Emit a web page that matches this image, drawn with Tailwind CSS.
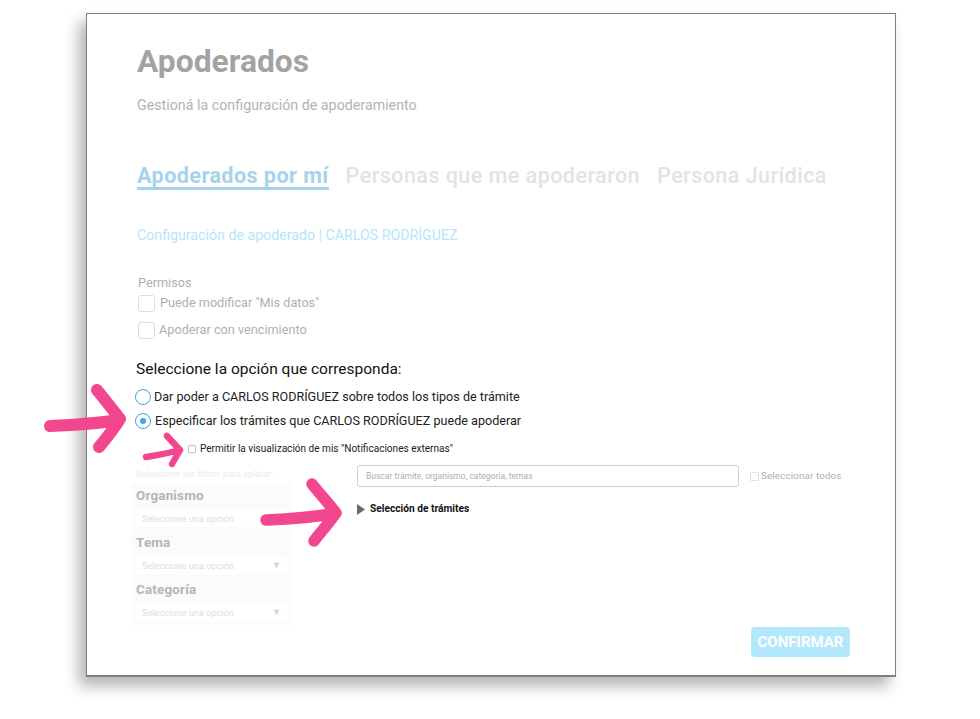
<!doctype html>
<html lang="es">
<head>
<meta charset="utf-8">
<script src="https://cdn.jsdelivr.net/npm/@tailwindcss/browser@4"></script>
</head>
<body class="relative w-[980px] h-[719px] overflow-hidden bg-white font-['Roboto',sans-serif]">
<main class="absolute left-[86px] top-[13px] w-[810px] h-[664px] border border-[#7f7f7f] border-b-2 bg-white shadow-[-7px_9px_14px_rgba(0,0,0,0.3)] pl-[50px] pr-[45px] pt-[29px]">
  <h1 class="text-[31.8px] leading-[36px] font-bold text-[#a3a3a3]">Apoderados</h1>
  <p class="mt-[16px] text-[14.25px] leading-[20px] text-[#b3b3b3]">Gestioná la configuración de apoderamiento</p>
  <nav class="mt-[47px] flex gap-[17px] text-[21.6px] leading-[28px] tracking-[0.42px] h-[31px] whitespace-nowrap">
    <span class="font-bold text-[#a6d3ec] border-b-[3px] border-[#a6d3ec] h-[28px]">Apoderados por mí</span>
    <span class="text-[#e3e3e3] font-medium">Personas que me apoderaron</span>
    <span class="text-[#e3e3e3] font-medium">Persona Jurídica</span>
  </nav>
  <h2 class="mt-[32px] text-[14.2px] leading-[20px] text-[#b5e6fb]">Configuración de apoderado | CARLOS RODRÍGUEZ</h2>
  <section class="mt-[29px] pl-[1px] text-[#b0b0b0] text-[12.7px]">
    <p class="leading-[18px]">Permisos</p>
    <label class="mt-[1px] flex items-center h-[20px]">
      <span class="w-[17px] h-[17px] rounded-[3px] border border-[#dcdcdc] shrink-0"></span>
      <span class="ml-[5px]">Puede modificar "Mis datos"</span>
    </label>
    <label class="mt-[7px] flex items-center h-[20px]">
      <span class="w-[17px] h-[17px] rounded-[3px] border border-[#dcdcdc] shrink-0"></span>
      <span class="ml-[4px]">Apoderar con vencimiento</span>
    </label>
  </section>
  <p class="mt-[18px] -ml-[1px] text-[15.5px] leading-[22px] text-[#111]">Seleccione la opción que corresponda:</p>
  <div class="mt-[7px] -ml-[2px] flex items-center h-[20px] text-[12.6px] text-[#222]">
    <span class="w-[16px] h-[16px] rounded-full border border-[#3ba6e8] shrink-0"></span>
    <span class="ml-[3px]">Dar poder a CARLOS RODRÍGUEZ sobre todos los tipos de trámite</span>
  </div>
  <div class="mt-[4px] -ml-[2px] flex items-center h-[20px] text-[12.6px] text-[#222]">
    <span class="w-[16px] h-[16px] rounded-full border border-[#3ba6e8] shrink-0 flex items-center justify-center"><span class="w-[6px] h-[6px] rounded-full bg-[#3ba6e8]"></span></span>
    <span class="ml-[4px]">Especificar los trámites que CARLOS RODRÍGUEZ puede apoderar</span>
  </div>
  <div class="mt-[11px] ml-[51px] flex items-center h-[14px] text-[10.05px] text-[#222]">
    <span class="w-[8px] h-[8px] border border-[#c4c4c4] rounded-[1px] shrink-0"></span>
    <span class="ml-[4px]">Permitir la visualización de mis "Notificaciones externas"</span>
  </div>
  <div class="mt-[9px] flex -ml-[6px]">
    <aside class="w-[158px] shrink-0 pt-[3px]">
      <p class="pl-[5px] text-[9.2px] leading-[12px] text-[#ececec] whitespace-nowrap">Seleccione los filtros para aplicar:</p>
      <div class="mt-[3px] bg-[#fbfbfb] h-[142px] px-[5px] pt-[5px] w-[161px]">
        <h3 class="text-[13.4px] leading-[16px] font-bold text-[#b5b5b5] tracking-[0.2px]">Organismo</h3>
        <div class="mt-[6px] h-[17px] bg-white rounded-[2px] flex items-center justify-between px-[6px] text-[9.2px] text-[#dedede]"><span>Seleccione una opción</span></div>
        <h3 class="mt-[8px] text-[13.4px] leading-[16px] font-bold text-[#b5b5b5] tracking-[0.2px]">Tema</h3>
        <div class="mt-[6px] h-[17px] bg-white rounded-[2px] flex items-center justify-between px-[6px] text-[9.2px] text-[#dedede]"><span>Seleccione una opción</span><span class="text-[9px] text-[#d4d4d4]">▼</span></div>
        <h3 class="mt-[8px] text-[13.4px] leading-[16px] font-bold text-[#b5b5b5] tracking-[0.2px]">Categoría</h3>
        <div class="mt-[6px] h-[17px] bg-white rounded-[2px] flex items-center justify-between px-[6px] text-[9.2px] text-[#dedede]"><span>Seleccione una opción</span><span class="text-[9px] text-[#d4d4d4]">▼</span></div>
      </div>
    </aside>
    <div class="ml-[68px] flex-1">
      <div class="flex items-center">
        <div class="w-[382px] h-[22px] border border-[#cfcfcf] rounded-[3px] pl-[8px] flex items-center text-[8.5px] text-[#aeaeae]">Buscar trámite, organismo, categoría, temas</div>
        <span class="ml-[11px] w-[9px] h-[9px] border border-[#e4e4e4] rounded-[1px]"></span>
        <span class="ml-[2px] text-[9.9px] tracking-[0.1px] text-[#b0b0b0]">Seleccionar todos</span>
      </div>
      <div class="mt-[14px] flex items-center h-[16px]">
        <svg width="8" height="11" viewBox="0 0 8 11" class="shrink-0"><path d="M0 0 L8 5.5 L0 11 Z" fill="#6a6a6a"/></svg>
        <span class="ml-[5px] text-[10.2px] font-bold text-[#111]">Selección de trámites</span>
      </div>
    </div>
  </div>
  <div class="mt-[2px] flex justify-end">
    <button class="w-[99px] h-[30px] rounded-[4px] bg-[#b3e7fc] text-white text-[15px] font-bold">CONFIRMAR</button>
  </div>
</main>
<svg class="absolute left-0 top-0 pointer-events-none" width="980" height="719" viewBox="0 0 980 719" fill="none" stroke="#f2478e" stroke-linecap="round" stroke-linejoin="round">
  <path stroke-width="12" d="M50 426 C75 425 100 423 118 420 M97 390 C106 401 113 410 120 419 C113 430 105 440 99 447"/>
  <path stroke-width="6.5" d="M146 457 C158 455 170 453 180 450 M167 436 L180 450 L172 464"/>
  <path stroke-width="11.5" d="M266 520 C290 519 315 517 336 513 M312 484 C320 494 329 504 336 513 C329 523 320 533 314 541"/>
</svg>
</body>
</html>
